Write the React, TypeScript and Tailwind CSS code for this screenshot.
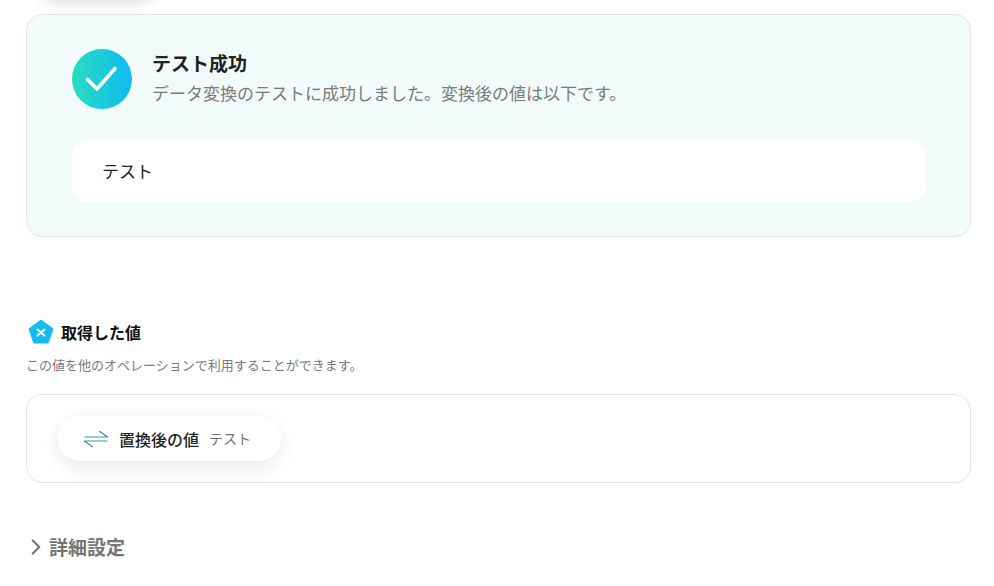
import { ChevronRight } from "lucide-react";

export default function App() {
  return (
    <div className="relative h-[586px] w-[994px] overflow-hidden bg-white font-['Noto_Sans_CJK_JP','Noto_Sans',sans-serif]">
      {/* pill scrolled off the top */}
      <div className="absolute left-[38px] top-[-46px] h-[44px] w-[120px] rounded-full bg-white shadow-[0_6px_14px_rgba(0,0,0,0.12)]" />

      <div className="px-[26px] pt-[14px] pr-[23px]">
        {/* test result */}
        <section className="h-[223px] rounded-[16px] border border-[#e2e6e8] bg-[#f2fafa] pl-[45px] pr-[45px] pt-[34px]">
          <div className="flex gap-[20px]">
            <div className="flex h-[60px] w-[60px] items-center justify-center rounded-full bg-gradient-to-r from-[#2bdcc0] to-[#10bbf0]">
              <svg width="36" height="30" viewBox="0 0 36 30" fill="none">
                <path d="M3.5 15.5 L13 25 L31 4.5" stroke="white" strokeWidth="3.6" strokeLinecap="round" strokeLinejoin="round" />
              </svg>
            </div>
            <div>
              <h2 className="text-[19px] font-bold leading-[28px] text-[#222]">テスト成功</h2>
              <p className="mt-[3px] text-[17px] leading-[26px] text-[#7a7a7a]">
                データ変換のテストに成功しました。変換後の値は以下です。
              </p>
            </div>
          </div>
          <div className="mt-[30px] flex h-[63px] items-center rounded-[16px] bg-white px-[30px] text-[17px] text-[#222]">
            テスト
          </div>
        </section>

        {/* output values */}
        <div className="mt-[81px] flex h-[28px] items-center gap-[7px] pl-[2px]">
          <svg width="26" height="26" viewBox="0 0 26 26">
            <path d="M13 1 L24.6 9.4 Q25 9.8 24.8 10.4 L20.4 23.4 Q20.2 24 19.5 24 L6.5 24 Q5.8 24 5.6 23.4 L1.2 10.4 Q1 9.8 1.4 9.4 Z" fill="#12bcee" stroke="#12bcee" strokeLinejoin="round" />
            <path d="M9.6 10.6 L16.4 16.6 M16.4 10.6 L9.6 16.6" stroke="white" strokeWidth="2" strokeLinecap="round" />
          </svg>
          <h3 className="text-[16px] font-bold leading-[28px] text-[#111]">取得した値</h3>
        </div>
        <p className="mt-[9px] text-[13px] leading-[20px] text-[#7a7a7a]">
          この値を他のオペレーションで利用することができます。
        </p>

        <div className="mt-[19px] flex h-[89px] items-center rounded-[16px] border border-[#e2e6e8] bg-white pl-[31px]">
          <div className="flex h-[45px] w-[223px] items-center rounded-full bg-white pl-[26px] shadow-[0_6px_20px_rgba(0,0,0,0.09)]">
            <svg width="24" height="18" viewBox="0 0 24 18" fill="none" stroke="#3f8fa6" strokeWidth="1.2">
              <path d="M0.5 7 H23.5 L15 1" />
              <path d="M23.5 11 H0.5 L9 17" />
            </svg>
            <span className="ml-[11px] text-[16px] font-medium text-[#222]">置換後の値</span>
            <span className="ml-[10px] text-[14px] text-[#6f6f6f]">テスト</span>
          </div>
        </div>

        {/* advanced settings */}
        <div className="mt-[49px] flex h-[30px] items-center">
          <ChevronRight className="ml-[-3px] h-[26px] w-[26px] text-[#757575]" strokeWidth={2} />
          <span className="text-[19px] font-bold text-[#757575]">詳細設定</span>
        </div>
      </div>
    </div>
  );
}
